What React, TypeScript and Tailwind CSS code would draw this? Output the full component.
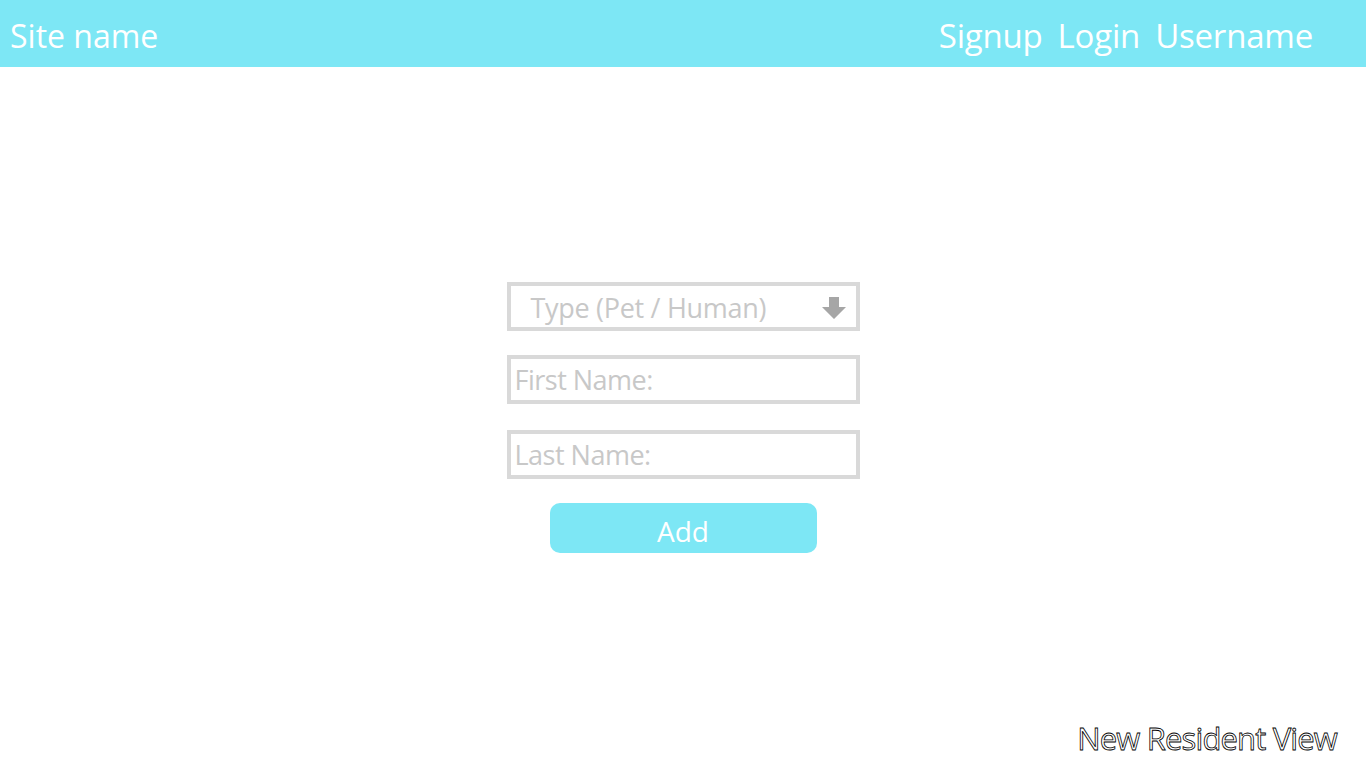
import React from "react";

const font = { fontFamily: '"Open Sans", "Noto Sans", sans-serif' };

function DownArrow() {
  return (
    <svg width="24" height="22" viewBox="0 0 24 22" className="shrink-0">
      <path d="M7 0h10v10h7L12 22 0 10h7z" fill="#a6a6a6" />
    </svg>
  );
}

export default function App() {
  return (
    <div className="h-screen w-full flex flex-col bg-white" style={font}>
      <header className="h-[67px] bg-[#7de7f5] flex items-center justify-between pl-[10px] pr-[53px] pt-[4px] text-white">
        <div className="text-[32px] leading-none">Site name</div>
        <nav className="flex gap-[15px] text-[33px] tracking-[-0.2px] leading-none">
          <span>Signup</span>
          <span>Login</span>
          <span>Username</span>
        </nav>
      </header>

      <main className="relative flex-1 flex items-center justify-center">
        <form className="flex flex-col items-center w-[353px]">
          <div className="w-full h-[49px] border-4 border-[#d9d9d9] flex items-center justify-between pl-[20px] pr-[10px] pt-[3px] text-[27px] text-[#c8c8c8] tracking-[-0.3px]">
            <span>Type (Pet / Human)</span>
            <DownArrow />
          </div>
          <div className="mt-[24px] w-full h-[49px] border-4 border-[#d9d9d9] flex items-center pl-[4px] pt-[2px] text-[27px] text-[#c8c8c8] tracking-[-0.5px]">
            First Name:
          </div>
          <div className="mt-[26px] w-full h-[49px] border-4 border-[#d9d9d9] flex items-center pl-[4px] pt-[2px] text-[27px] text-[#c8c8c8] tracking-[-0.5px]">
            Last Name:
          </div>
          <button
            type="button"
            className="mt-[24px] w-[267px] h-[50px] rounded-[10px] bg-[#7de7f5] text-white text-[28px] pt-[6px]"
          >
            Add
          </button>
        </form>

        <div className="absolute right-[29px] bottom-[14px] text-[31px] tracking-[-0.85px] text-white [-webkit-text-stroke:0.8px_#000] leading-none">
          New Resident View
        </div>
      </main>
    </div>
  );
}
